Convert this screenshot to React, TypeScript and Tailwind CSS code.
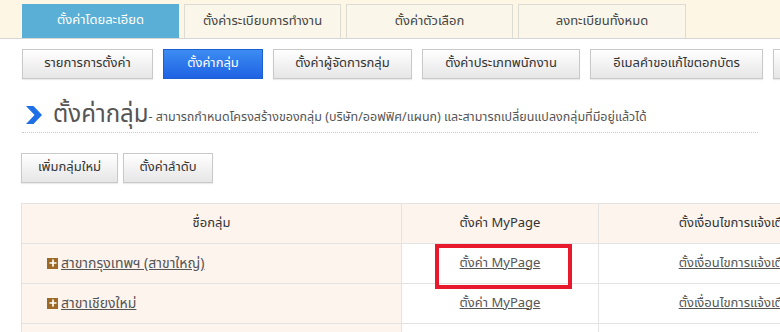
import { Plus } from "lucide-react";

const TABS = [
  { label: "ตั้งค่าโดยละเอียด", w: "w-[157px]", active: true },
  { label: "ตั้งค่าระเบียบการทำงาน", w: "w-[157px]" },
  { label: "ตั้งค่าตัวเลือก", w: "w-[167px]" },
  { label: "ลงทะเบียนทั้งหมด", w: "w-[168px]" },
];

const SUB = [
  { label: "รายการการตั้งค่า", w: "w-[131px]" },
  { label: "ตั้งค่ากลุ่ม", w: "w-[100px]", active: true },
  { label: "ตั้งค่าผู้จัดการกลุ่ม", w: "w-[139px]" },
  { label: "ตั้งค่าประเภทพนักงาน", w: "w-[158px]" },
  { label: "อีเมลคำขอแก้ไขตอกบัตร", w: "w-[173px]" },
  { label: "ตั้งค่าอื่นๆ", w: "w-[120px]" },
];

const ROWS = ["สาขากรุงเทพฯ (สาขาใหญ่)", "สาขาเชียงใหม่", "สาขาภูเก็ต"];

const grayBtn =
  "h-[30px] border border-[#c9c9c9] bg-gradient-to-b from-white to-[#e6e6e6] text-[13px] text-[#333] shadow-[0_1px_1px_rgba(0,0,0,0.08)] shrink-0";

export default function App() {
  return (
    <div
      className="relative w-[780px] h-[332px] overflow-hidden bg-white text-[#333]"
      style={{ fontFamily: 'Tahoma, "Noto Sans Thai", "Noto Sans", sans-serif' }}
    >
      {/* top tabs */}
      <div className="h-[39px] bg-[#fdf6e4] border-b border-[#d6d6d6] flex items-end gap-[5px] pl-[22px]">
        {TABS.map((t) => (
          <div
            key={t.label}
            className={`${t.w} h-[34px] shrink-0 flex items-center justify-center text-[13px] ${
              t.active
                ? "bg-[#5aafd6] text-white border border-[#5aafd6]"
                : "bg-[#faf6e9] text-[#444] border border-b-0 border-[#dcdcd4]"
            }`}
          >
            {t.label}
          </div>
        ))}
      </div>

      {/* sub buttons */}
      <div className="flex gap-[10px] pl-[22px] mt-[10px]">
        {SUB.map((b) =>
          b.active ? (
            <button
              key={b.label}
              className={`${b.w} h-[30px] shrink-0 border border-[#1c5fd0] bg-gradient-to-b from-[#3d8cf2] to-[#1f62e3] text-white text-[13px]`}
            >
              {b.label}
            </button>
          ) : (
            <button key={b.label} className={`${b.w} ${grayBtn}`}>
              {b.label}
            </button>
          )
        )}
      </div>

      {/* heading */}
      <div className="mx-[22px] mt-[19px] border-b border-dotted border-[#c8c8c8] flex items-end">
        <svg width="16" height="18" viewBox="0 0 16 18" className="ml-[4px] mb-[8px] shrink-0">
          <path d="M0 0 H7.5 L16 9 L7.5 18 H0 L8.5 9 Z" fill="#1f6fe6" />
        </svg>
        <span className="ml-[11px] text-[24px] leading-[34px] text-[#555]">ตั้งค่ากลุ่ม</span>
        <span className="text-[12.5px] leading-[20px] mb-[4px] text-[#555] whitespace-nowrap">
          - สามารถกำหนดโครงสร้างของกลุ่ม (บริษัท/ออฟฟิศ/แผนก) และสามารถเปลี่ยนแปลงกลุ่มที่มีอยู่แล้วได้
        </span>
      </div>

      {/* action buttons */}
      <div className="flex gap-[5px] pl-[21px] mt-[20px]">
        <button className={`w-[97px] ${grayBtn}`}>เพิ่มกลุ่มใหม่</button>
        <button className={`w-[90px] ${grayBtn}`}>ตั้งค่าลำดับ</button>
      </div>

      {/* table */}
      <table className="ml-[21px] mt-[20px] border-collapse text-[13px] table-fixed w-[858px]">
        <thead>
          <tr className="h-[40px] bg-[#fdf4ee]">
            <th className="w-[380px] border border-[#e3e3e3] font-normal text-[#333]">ชื่อกลุ่ม</th>
            <th className="w-[197px] border border-[#e3e3e3] font-normal text-[#333]">ตั้งค่า MyPage</th>
            <th className="border border-[#e3e3e3] font-normal text-[#333] whitespace-nowrap">
              ตั้งเงื่อนไขการแจ้งเตือน
            </th>
          </tr>
        </thead>
        <tbody>
          {ROWS.map((r) => (
            <tr key={r} className="h-[40px]">
              <td className="bg-[#fdf4ee] border border-[#e3e3e3] pl-[25px]">
                <span className="inline-flex items-center gap-[3px]">
                  <span className="w-[11px] h-[11px] bg-[#9c6a26] flex items-center justify-center">
                    <Plus className="w-[10px] h-[10px] text-white" strokeWidth={4} />
                  </span>
                  <a className="underline text-[14px] text-[#555] cursor-pointer">{r}</a>
                </span>
              </td>
              <td className="border border-[#e3e3e3] text-center">
                <a className="underline text-[#555] cursor-pointer">ตั้งค่า MyPage</a>
              </td>
              <td className="border border-[#e3e3e3] text-center whitespace-nowrap">
                <a className="underline text-[#555] cursor-pointer">ตั้งเงื่อนไขการแจ้งเตือน</a>
              </td>
            </tr>
          ))}
        </tbody>
      </table>

      {/* annotation highlight */}
      <div className="absolute left-[435px] top-[244px] w-[137px] h-[45px] border-[4px] border-[#e8192c]" />
    </div>
  );
}
